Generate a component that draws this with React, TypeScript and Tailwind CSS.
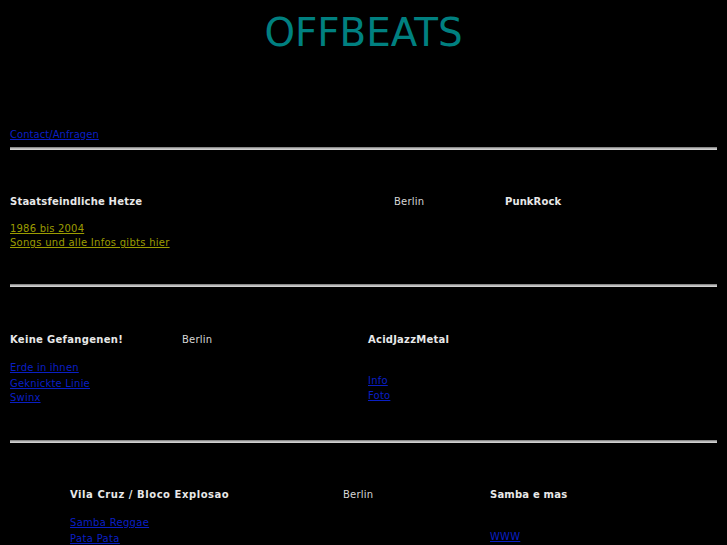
import React from "react";

const Hr = () => (
  <div className="mx-[10px] h-[3px] border-t border-t-[#8a8a8a] border-b border-b-[#d0d0d0] bg-[#b8b8b8]" />
);

const Lnk = ({ children, c = "text-[#0a1fc4]" }: { children: React.ReactNode; c?: string }) => (
  <a href="#" className={`${c} underline block leading-[14px]`}>
    {children}
  </a>
);

export default function App() {
  return (
    <div
      className="bg-black min-h-screen text-[10px] tracking-[0.2px] text-[#e8e8e8] overflow-hidden"
      style={{ fontFamily: '"DejaVu Sans", Verdana, sans-serif' }}
    >
      <h1 className="text-center pt-[11px] leading-[44px] text-[38.8px] tracking-normal text-[#008080]">OFFBEATS</h1>

      <div className="mt-[72px] ml-[10px]">
        <a href="#" className="text-[#0a1fc4] underline leading-[14px] tracking-[0.05px]">Contact/Anfragen</a>
      </div>
      <div className="mt-[5px]">
        <Hr />
      </div>

      {/* Row 1 */}
      <div className="mt-[45px] ml-[10px] grid grid-cols-[384px_111px_1fr] leading-[14px]">
        <div>
          <div className="font-bold">Staatsfeindliche Hetze</div>
          <div className="mt-[13px]">
            <Lnk c="text-[#9c9c00]">1986 bis 2004</Lnk>
            <Lnk c="text-[#9c9c00] tracking-[0.27px]">Songs und alle Infos gibts hier</Lnk>
          </div>
        </div>
        <div className="text-[#d6d6d6]">Berlin</div>
        <div className="font-bold tracking-[0.1px]">PunkRock</div>
      </div>
      <div className="mt-[34px]">
        <Hr />
      </div>

      {/* Row 2 */}
      <div className="mt-[46px] ml-[10px] grid grid-cols-[172px_186px_1fr] leading-[14px]">
        <div>
          <div className="font-bold tracking-[0.3px]">Keine Gefangenen!</div>
          <div className="mt-[14px]">
            <Lnk>Erde in ihnen</Lnk>
            <div className="mt-[2px]">
              <Lnk>Geknickte Linie</Lnk>
              <Lnk>Swinx</Lnk>
            </div>
          </div>
        </div>
        <div className="text-[#d6d6d6]">Berlin</div>
        <div>
          <div className="font-bold tracking-[0.23px]">AcidJazzMetal</div>
          <div className="mt-[27px]">
            <Lnk>Info</Lnk>
            <div className="mt-[1px]">
              <Lnk>Foto</Lnk>
            </div>
          </div>
        </div>
      </div>
      <div className="mt-[35px]">
        <Hr />
      </div>

      {/* Row 3 */}
      <div className="mt-[45px] ml-[70px] grid grid-cols-[273px_147px_1fr] leading-[14px]">
        <div>
          <div className="font-bold tracking-[0.55px]">Vila Cruz / Bloco Explosao</div>
          <div className="mt-[14px]">
            <Lnk c="text-[#0a1fc4] tracking-[0.3px]">Samba Reggae</Lnk>
            <div className="mt-[2px]">
              <Lnk c="text-[#0a1fc4] tracking-[0.35px]">Pata Pata</Lnk>
            </div>
          </div>
        </div>
        <div className="text-[#d6d6d6]">Berlin</div>
        <div>
          <div className="font-bold">Samba e mas</div>
          <div className="mt-[28px]">
            <Lnk>WWW</Lnk>
          </div>
        </div>
      </div>
    </div>
  );
}
